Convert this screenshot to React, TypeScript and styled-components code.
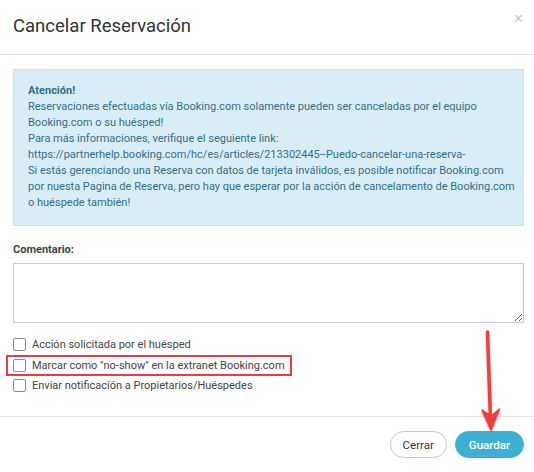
import React from 'react';
import styled, { createGlobalStyle } from 'styled-components';

const GlobalStyle = createGlobalStyle`
  html, body {
    margin: 0;
    padding: 0;
    background: #fff;
  }
  body {
    font-family: Roboto, "Liberation Sans", Arial, sans-serif;
    color: #333;
  }
  * {
    box-sizing: border-box;
  }
`;

const Modal = styled.div`
  position: relative;
  width: 534px;
  height: 472px;
  display: flex;
  flex-direction: column;
  background: #fff;
`;

const Header = styled.div`
  height: 55px;
  display: flex;
  align-items: center;
  justify-content: space-between;
  padding: 0 11px 2px 13px;
  border-bottom: 1px solid #e5e5e5;
`;

const Title = styled.h4`
  margin: 0;
  font-size: 18.5px;
  font-weight: 400;
  color: #333;
`;

const CloseButton = styled.button`
  border: 0;
  background: none;
  padding: 0;
  margin-top: -14px;
  font-size: 16px;
  line-height: 1;
  color: #c4c4c4;
  font-family: "Liberation Sans", Arial, sans-serif;
  cursor: pointer;
`;

const Body = styled.div`
  flex: 1;
  padding: 14px 10px 0 13px;
  display: flex;
  flex-direction: column;
`;

const Alert = styled.div`
  background: #d9edf7;
  border: 1px solid #bce8f1;
  color: #31708f;
  padding: 13px 14px 14px;
  font-size: 11px;
  line-height: 16px;
`;

const AlertLine = styled.div<{ $strong?: boolean }>`
  white-space: nowrap;
  font-weight: ${(p) => (p.$strong ? 700 : 400)};
`;

const Label = styled.label`
  display: block;
  margin-top: 17px;
  font-size: 11px;
  font-weight: 700;
  color: #444;
  line-height: 14px;
`;

const Comment = styled.textarea`
  display: block;
  margin-top: 6px;
  width: 100%;
  height: 60px;
  border: 1px solid #ccc;
  border-radius: 0;
  resize: vertical;
  font-family: inherit;
  font-size: 12px;
  outline: none;
`;

const Options = styled.div`
  margin-top: 11px;
  display: flex;
  flex-direction: column;
  align-items: flex-start;
`;

const OptionRow = styled.label<{ $highlight?: boolean }>`
  display: flex;
  align-items: center;
  gap: 6px;
  height: ${(p) => (p.$highlight ? '21px' : '20.5px')};
  font-size: 11px;
  color: #444;
  ${(p) =>
    p.$highlight
      ? `
    border: 2px solid #ee3a43;
    margin-left: -7px;
    padding: 0 5px 0 5px;
  `
      : ''}
`;

const Check = styled.input.attrs({ type: 'checkbox' })`
  appearance: none;
  margin: 0;
  width: 13px;
  height: 13px;
  border: 1px solid #8c8c8c;
  border-radius: 2px;
  background: #fff;
`;

const Footer = styled.div`
  height: 56px;
  border-top: 1px solid #e5e5e5;
  display: flex;
  align-items: center;
  justify-content: flex-end;
  gap: 8px;
  padding: 0 10px 0;
`;

const PillButton = styled.button<{ $primary?: boolean }>`
  height: 27px;
  border-radius: 14px;
  font-family: inherit;
  font-size: 11.5px;
  padding: 0 ${(p) => (p.$primary ? '13px' : '12px')};
  border: 1px solid ${(p) => (p.$primary ? '#3eb0d6' : '#c8c8c8')};
  background: ${(p) => (p.$primary ? '#3eb0d6' : '#fff')};
  color: ${(p) => (p.$primary ? '#fff' : '#333')};
  font-weight: ${(p) => (p.$primary ? 500 : 400)};
  cursor: pointer;
`;

const Arrow = styled.svg`
  position: absolute;
  left: 476px;
  top: 328px;
  pointer-events: none;
`;

const alertLines = [
  'Reservaciones efectuadas vía Booking.com solamente pueden ser canceladas por el equipo',
  'Booking.com o su huésped!',
  'Para más informaciones, verifique el seguiente link:',
  'https://partnerhelp.booking.com/hc/es/articles/213302445--Puedo-cancelar-una-reserva-',
  'Si estás gerenciando una Reserva con datos de tarjeta inválidos, es posible notificar Booking.com',
  'por nuesta Pagina de Reserva, pero hay que esperar por la acción de cancelamento de Booking.com',
  'o huéspede también!',
];

const options = [
  { text: 'Acción solicitada por el huésped' },
  { text: 'Marcar como "no-show" en la extranet Booking.com', highlight: true },
  { text: 'Enviar notificación a Propietarios/Huéspedes' },
];

export default function App() {
  return (
    <>
      <GlobalStyle />
      <Modal>
        <Header>
          <Title>Cancelar Reservación</Title>
          <CloseButton>×</CloseButton>
        </Header>
        <Body>
          <Alert>
            <AlertLine $strong>Atención!</AlertLine>
            {alertLines.map((l) => (
              <AlertLine key={l}>{l}</AlertLine>
            ))}
          </Alert>
          <Label>Comentario:</Label>
          <Comment />
          <Options>
            {options.map((o) => (
              <OptionRow key={o.text} $highlight={o.highlight}>
                <Check />
                {o.text}
              </OptionRow>
            ))}
          </Options>
        </Body>
        <Footer>
          <PillButton>Cerrar</PillButton>
          <PillButton $primary>Guardar</PillButton>
        </Footer>
        <Arrow width="32" height="110" viewBox="0 0 32 110">
          <defs>
            <filter id="sh" x="-50%" y="-10%" width="200%" height="130%">
              <feDropShadow dx="0" dy="1.5" stdDeviation="1.2" floodColor="#000" floodOpacity="0.35" />
            </filter>
          </defs>
          <g filter="url(#sh)" fill="#f03d3d" stroke="#f03d3d">
            <line x1="11.5" y1="4" x2="14.5" y2="92" strokeWidth="3.5" strokeLinecap="round" />
            <path d="M6 82 L15 102 L23.5 81 L15 88 Z" strokeWidth="1.5" strokeLinejoin="round" />
          </g>
        </Arrow>
      </Modal>
    </>
  );
}
